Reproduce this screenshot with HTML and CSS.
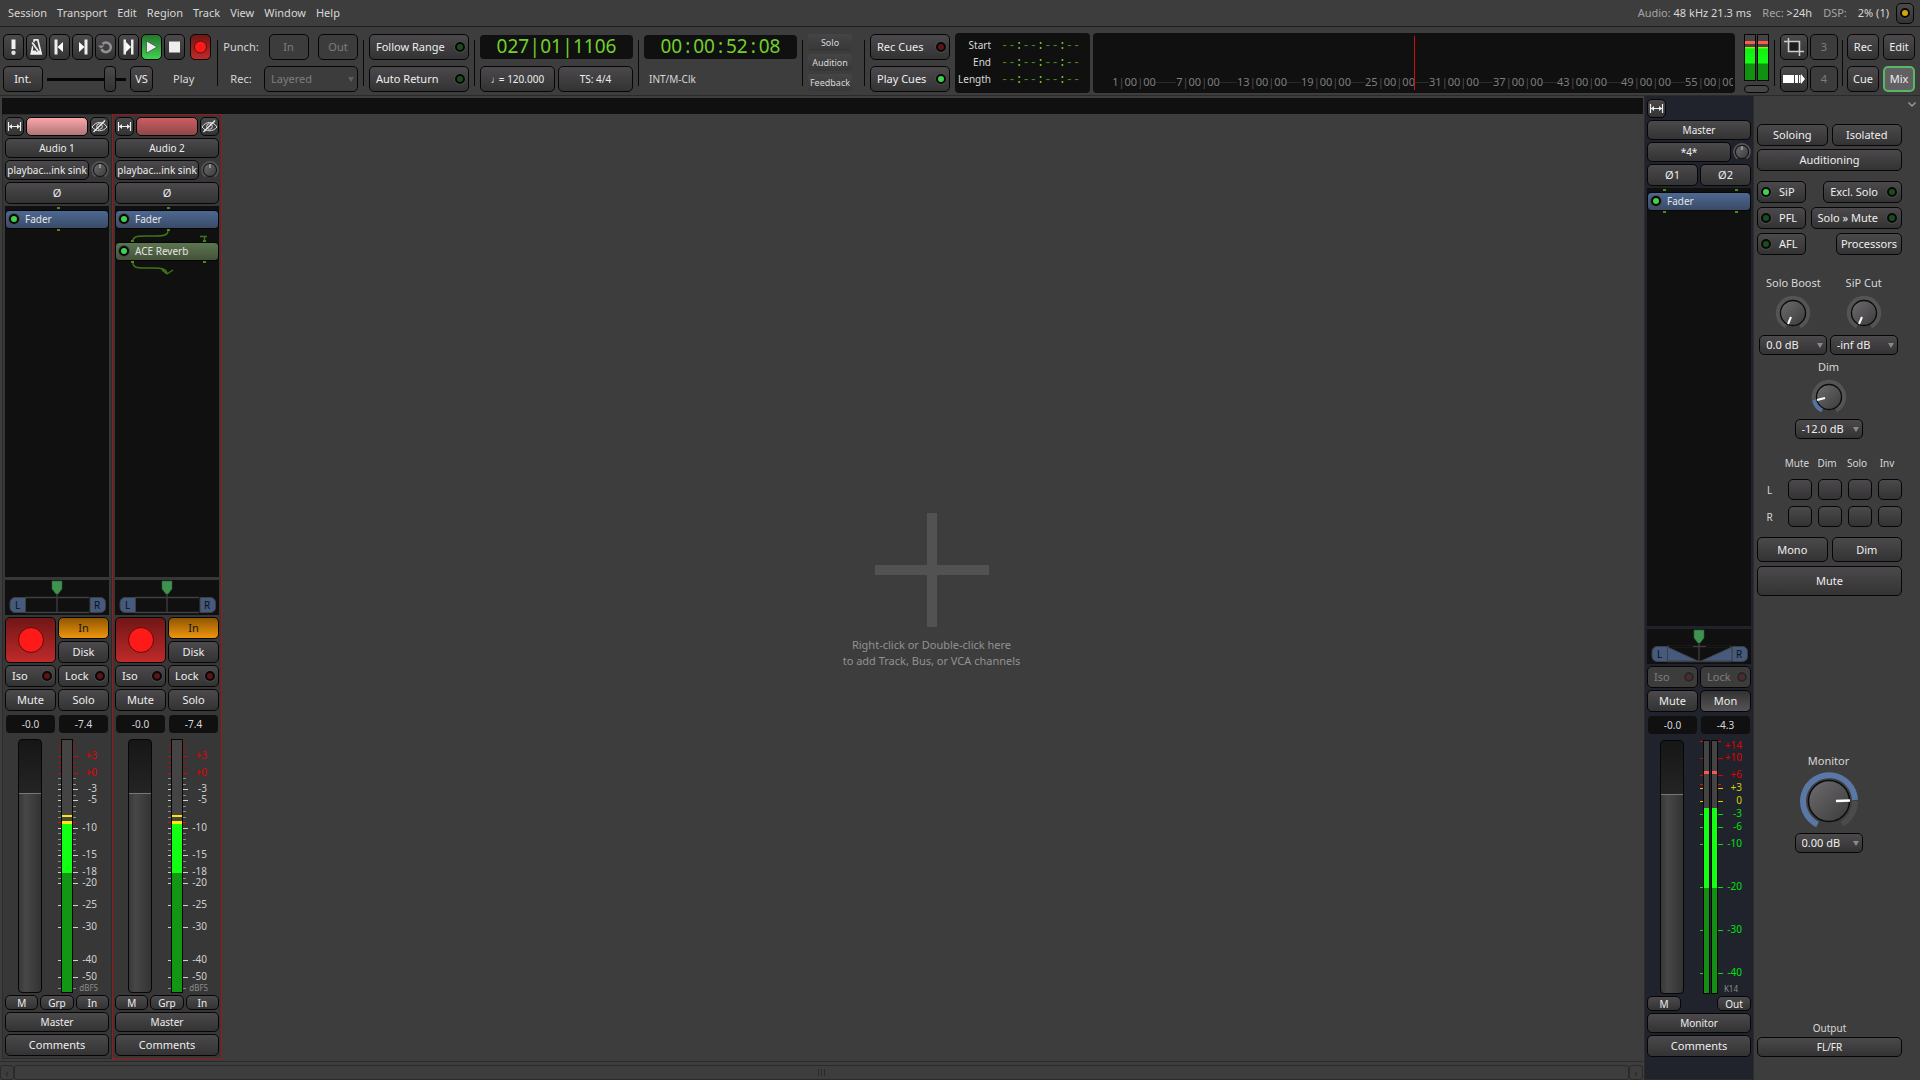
FILE: index.html
```html
<!DOCTYPE html>
<html lang="en">
<head>
    <meta charset="UTF-8">
    <meta name="viewport" content="width=device-width, initial-scale=1.0">
    <title>Mixer</title>
    <link rel="stylesheet" href="styles.css">
</head>
<body>
    <!-- shared icons -->
    <svg class="defs" width="0" height="0">
        <defs>
            <linearGradient id="knobFill" x1="0" y1="0" x2="1" y2="1">
                <stop offset="0" stop-color="#6e6c6e"/>
                <stop offset="1" stop-color="#3c3b3c"/>
            </linearGradient>
            <symbol id="i-width" viewBox="0 0 15 15">
                <path d="M1.500 3v9M13.500 3v9M2 7.500h11" fill="none" stroke="#eee" stroke-width="1.200"/>
                <path d="M2 7.500l3-2.500v5zM13 7.500l-3-2.500v5z" fill="#eee"/>
            </symbol>
            <symbol id="i-hide" viewBox="0 0 17 15">
                <path d="M1 8c4-6 11-6 15 0c-4 5-11 5-15 0z" fill="none" stroke="#ddd"/>
                <circle cx="8.500" cy="7.500" r="2.800" fill="none" stroke="#ddd"/>
                <path d="M2.500 13L14 1.500" stroke="#eee" stroke-width="1.300"/>
            </symbol>
            <symbol id="i-knob" viewBox="0 0 18 18">
                <path d="M4.500 15.500a8 8 0 1 1 9 0" fill="none" stroke="#575657" stroke-width="1.600"/>
                <circle cx="9" cy="9" r="6.500" fill="url(#knobFill)" stroke="#111"/>
                <path d="M9 3v4" stroke="#ccc"/>
            </symbol>
            <symbol id="i-dial" viewBox="0 0 36 36">
                <path d="M11 31.500a15.200 15.200 0 1 1 14 0" fill="none" stroke="#555455" stroke-width="4"/>
                <circle cx="18" cy="18" r="12.500" fill="url(#knobFill)" stroke="#0c0c0c" stroke-width="1.300"/>
            </symbol>
            <symbol id="i-pan" viewBox="0 0 104 35">
                <path d="M20 17.500h64M20 32.500h64M52 13v20" stroke="#3f3f40" stroke-width="1.300"/>
                <path d="M20.500 17.500H10a5 5 0 0 0-5 5v5a5 5 0 0 0 5 5h10.500zM85 17.500h10.500a5 5 0 0 1 5 5v5a5 5 0 0 1-5 5H85z" fill="#455a7d" stroke="#3f3f40"/>
                <path d="M47 1h10v8l-4 5h-2l-4-5z" fill="#3e9350" stroke="#2a5f37" stroke-width=".600"/>
            </symbol>
        </defs>
    </svg>

    <!-- menu bar -->
    <header class="menubar">
        <nav class="menu">
            <button>Session</button>
            <button>Transport</button>
            <button>Edit</button>
            <button>Region</button>
            <button>Track</button>
            <button>View</button>
            <button>Window</button>
            <button>Help</button>
        </nav>
        <div class="status">
            <span><em>Audio:</em> 48 kHz 21.3 ms</span>
            <span><em>Rec:</em> &gt;24h</span>
            <span><em>DSP:</em></span>
            <span>2% (1)</span>
            <button class="btn log" aria-label="Error log"><i class="led yellow"></i></button>
        </div>
    </header>

    <!-- transport bar -->
    <section class="toolbar">
        <div class="group transport">
            <div class="row">
                <button class="btn" aria-label="Panic"><svg width="15" height="18" viewBox="0 0 15 18"><path d="M5.500 1.500h4v9.500h-4z" fill="#f0f0f0"/><circle cx="7.500" cy="14.800" r="2.200" fill="#e0e0e0"/></svg></button>
                <button class="btn" aria-label="Metronome"><svg width="15" height="18" viewBox="0 0 15 18"><path d="M5.200 1.800h3.600l3.400 14H2.200z" fill="none" stroke="#f0f0f0" stroke-width="1.700"/><path d="M2.800 12.500h9l.8 3.500H2z" fill="#f0f0f0"/><path d="M3.200 4.500l6 8.500" stroke="#3a393a" stroke-width="3.500"/><path d="M3.200 4.500l6 8.500" stroke="#f0f0f0" stroke-width="1.800"/></svg></button>
                <button class="btn" aria-label="Go to start"><svg width="15" height="16" viewBox="0 0 15 16"><path d="M2.500 .500h3v15h-3z" fill="#eee"/><path d="M5.500 8l5.500-5v10z" fill="#fff"/></svg></button>
                <button class="btn" aria-label="Go to end"><svg width="15" height="16" viewBox="0 0 15 16"><path d="M9.500 .500h3v15h-3z" fill="#eee"/><path d="M9.500 8L4 3v10z" fill="#fff"/></svg></button>
                <button class="btn" aria-label="Loop"><svg width="15" height="16" viewBox="0 0 15 16"><path d="M4.500 5a4.800 4.800 0 1 1-1 5" fill="none" stroke="#929092" stroke-width="2.600"/><path d="M0 6.500h6.500L3 9.500z" fill="#929092"/></svg></button>
                <button class="btn" aria-label="Play range"><svg width="15" height="16" viewBox="0 0 15 16"><path d="M2.500 .500h2.500v15H2.500zM10 .500h2.500v15H10z" fill="#eee"/><path d="M5 3l5 5-5 5z" fill="#fff"/></svg></button>
                <button class="btn play" aria-label="Play"><svg width="15" height="16" viewBox="0 0 15 16"><path d="M2.500 2L13 8 2.500 14z" fill="#eee" stroke="#333" stroke-width=".600"/></svg></button>
                <button class="btn" aria-label="Stop"><svg width="15" height="16" viewBox="0 0 15 16"><path d="M2 2.500h11v11H2z" fill="#eee"/></svg></button>
                <button class="btn rec" aria-label="Record"><svg width="15" height="16" viewBox="0 0 15 16"><circle cx="7.500" cy="8" r="6" fill="#ff1a1a" stroke="#5c0d0d"/></svg></button>
            </div>
            <div class="row">
                <button class="btn int">Int.</button>
                <input class="shuttle" type="range" value="86" aria-label="Shuttle speed">
                <button class="btn vs">VS</button>
                <span class="state">Play</span>
            </div>
        </div>
        <i class="sep"></i>
        <div class="group punch">
            <div class="row">
                <span class="caption">Punch:</span>
                <button class="btn" disabled>In</button>
                <button class="btn" disabled>Out</button>
            </div>
            <div class="row">
                <label class="caption" for="recmode">Rec:</label>
                <span class="select"><select id="recmode" disabled><option>Layered</option></select></span>
            </div>
        </div>
        <i class="sep"></i>
        <div class="group follow">
            <button class="btn toggle">Follow Range<i class="led green-off"></i></button>
            <button class="btn toggle">Auto Return<i class="led green-off"></i></button>
        </div>
        <i class="sep"></i>
        <div class="group clocks">
            <div class="clock">027<b>|</b>01<b>|</b>1106</div>
            <div class="row">
                <button class="btn small"><i class="note">♩</i>= 120.000</button>
                <button class="btn small">TS: 4/4</button>
            </div>
        </div>
        <i class="sep"></i>
        <div class="group clocks">
            <div class="clock">00<b>:</b>00<b>:</b>52<b>:</b>08</div>
            <div class="source">INT/M-Clk</div>
        </div>
        <i class="sep"></i>
        <div class="alerts">
            <button>Solo</button>
            <button>Audition</button>
            <button>Feedback</button>
        </div>
        <i class="sep"></i>
        <div class="group cues">
            <button class="btn toggle">Rec Cues<i class="led red"></i></button>
            <button class="btn toggle">Play Cues<i class="led green"></i></button>
        </div>
        <dl class="selection">
            <dt>Start</dt><dd>--<b>:</b>--<b>:</b>--<b>:</b>--</dd>
            <dt>End</dt><dd>--<b>:</b>--<b>:</b>--<b>:</b>--</dd>
            <dt>Length</dt><dd>--<b>:</b>--<b>:</b>--<b>:</b>--</dd>
        </dl>
        <div class="timeline">
            <div class="ruler">
                <span>1<b>|</b>00<b>|</b>00</span>
                <span>7<b>|</b>00<b>|</b>00</span>
                <span>13<b>|</b>00<b>|</b>00</span>
                <span>19<b>|</b>00<b>|</b>00</span>
                <span>25<b>|</b>00<b>|</b>00</span>
                <span>31<b>|</b>00<b>|</b>00</span>
                <span>37<b>|</b>00<b>|</b>00</span>
                <span>43<b>|</b>00<b>|</b>00</span>
                <span>49<b>|</b>00<b>|</b>00</span>
                <span>55<b>|</b>00<b>|</b>00</span>
            </div>
            <div class="playhead"></div>
        </div>
        <div class="minimeter">
            <div class="bars"><i></i><i></i></div>
            <button aria-label="Reset peak"></button>
        </div>
        <i class="sep"></i>
        <div class="group views">
            <div class="row">
                <button class="btn" aria-label="Crop"><svg width="20" height="18" viewBox="0 0 20 18"><path d="M6 4h8v9H6z" fill="#1c1c1c"/><path d="M0 3.500h15.500V18M4.500 0v13.500H20" fill="none" stroke="#ccc" stroke-width="1.500"/></svg></button>
                <button class="btn" disabled>3</button>
            </div>
            <div class="row">
                <button class="btn" aria-label="Clips"><svg width="22" height="10" viewBox="0 0 22 10"><path d="M0 1h11v8H0zM12 1h3v8h-3zM16 1h1.500v8H16zM18 0l4 5-4 5z" fill="#fff"/></svg></button>
                <button class="btn" disabled>4</button>
            </div>
        </div>
        <i class="sep"></i>
        <div class="group pages">
            <div class="row">
                <button class="btn">Rec</button>
                <button class="btn">Edit</button>
            </div>
            <div class="row">
                <button class="btn">Cue</button>
                <button class="btn current">Mix</button>
            </div>
        </div>
    </section>

    <main class="mixer">
        <section class="tracks">
            <div class="groups"></div>
            <div class="strips">
                <!-- Audio 1 -->
                <article class="strip">
                    <div class="row head">
                        <button class="btn" aria-label="Strip width"><svg width="15" height="15"><use href="#i-width"/></svg></button>
                        <button class="btn color pink" aria-label="Track color"></button>
                        <button class="btn" aria-label="Hide strip"><svg width="17" height="15"><use href="#i-hide"/></svg></button>
                    </div>
                    <button class="btn small name">Audio 1</button>
                    <div class="row input">
                        <button class="btn small">playbac…ink sink</button>
                        <svg width="18" height="18"><use href="#i-knob"/></svg>
                    </div>
                    <button class="btn phase">Ø</button>
                    <div class="processors">
                        <svg width="104" height="4"><path d="M52 1h3v2h-3z" fill="#4a8a18"/></svg>
                        <button class="proc"><i class="led green"></i>Fader</button>
                        <svg width="104" height="13"><path d="M52 0h3v2h-3z" fill="#4a8a18"/></svg>
                    </div>
                    <svg class="panner" width="104" height="35"><use href="#i-pan"/><text x="10" y="29">L</text><text x="89" y="29">R</text></svg>
                    <div class="arm">
                        <button class="btn rec" aria-label="Record arm"><svg width="28" height="28"><circle cx="14" cy="14" r="12.500" fill="#ff1a1a" stroke="#5c0d0d"/></svg></button>
                        <button class="btn in">In</button>
                        <button class="btn">Disk</button>
                    </div>
                    <div class="pair">
                        <button class="btn toggle">Iso<i class="led red"></i></button>
                        <button class="btn toggle">Lock<i class="led red"></i></button>
                        <button class="btn">Mute</button>
                        <button class="btn">Solo</button>
                    </div>
                    <div class="pair levels">
                        <input class="value" value="-0.0" aria-label="Gain">
                        <output class="value">-7.4</output>
                    </div>
                    <div class="pair faders">
                        <input class="fader" type="range" value="79" aria-label="Fader">
                        <svg class="scale" data-scale="dbfs" width="51" height="254"></svg>
                    </div>
                    <div class="row foot">
                        <button class="btn small">M</button>
                        <button class="btn small">Grp</button>
                        <button class="btn small">In</button>
                    </div>
                    <button class="btn small out">Master</button>
                    <button class="btn comments">Comments</button>
                </article>

                <!-- Audio 2 -->
                <article class="strip selected">
                    <div class="row head">
                        <button class="btn" aria-label="Strip width"><svg width="15" height="15"><use href="#i-width"/></svg></button>
                        <button class="btn color crimson" aria-label="Track color"></button>
                        <button class="btn" aria-label="Hide strip"><svg width="17" height="15"><use href="#i-hide"/></svg></button>
                    </div>
                    <button class="btn small name">Audio 2</button>
                    <div class="row input">
                        <button class="btn small">playbac…ink sink</button>
                        <svg width="18" height="18"><use href="#i-knob"/></svg>
                    </div>
                    <button class="btn phase">Ø</button>
                    <div class="processors">
                        <svg width="104" height="4"><path d="M52 1h3v2h-3z" fill="#4a8a18"/></svg>
                        <button class="proc"><i class="led green"></i>Fader</button>
                        <svg width="104" height="13">
                            <path d="M52 0h3v2h-3zM16 11h3v2h-3zM88 11h3v2h-3z" fill="#4a8a18"/>
                            <path d="M53 2c0 4-4 5-12 5H30c-9 0-12 1-12 5M85 7.500h7M89.500 7v5" fill="none" stroke="#3f7614" stroke-width="1.400"/>
                        </svg>
                        <button class="proc plugin"><i class="led green"></i>ACE Reverb</button>
                        <svg width="104" height="15">
                            <path d="M16 0h3v2h-3zM88 0h3v2h-3z" fill="#4a8a18"/>
                            <path d="M18 2c0 4 3 5 12 5h9c8 0 13 1 13 6M47 9l5 4 6-4" fill="none" stroke="#3f7614" stroke-width="1.400"/>
                        </svg>
                    </div>
                    <svg class="panner" width="104" height="35"><use href="#i-pan"/><text x="10" y="29">L</text><text x="89" y="29">R</text></svg>
                    <div class="arm">
                        <button class="btn rec" aria-label="Record arm"><svg width="28" height="28"><circle cx="14" cy="14" r="12.500" fill="#ff1a1a" stroke="#5c0d0d"/></svg></button>
                        <button class="btn in">In</button>
                        <button class="btn">Disk</button>
                    </div>
                    <div class="pair">
                        <button class="btn toggle">Iso<i class="led red"></i></button>
                        <button class="btn toggle">Lock<i class="led red"></i></button>
                        <button class="btn">Mute</button>
                        <button class="btn">Solo</button>
                    </div>
                    <div class="pair levels">
                        <input class="value" value="-0.0" aria-label="Gain">
                        <output class="value">-7.4</output>
                    </div>
                    <div class="pair faders">
                        <input class="fader" type="range" value="79" aria-label="Fader">
                        <svg class="scale" data-scale="dbfs" width="51" height="254"></svg>
                    </div>
                    <div class="row foot">
                        <button class="btn small">M</button>
                        <button class="btn small">Grp</button>
                        <button class="btn small">In</button>
                    </div>
                    <button class="btn small out">Master</button>
                    <button class="btn comments">Comments</button>
                </article>

                <!-- empty area -->
                <div class="empty">
                    <svg width="114" height="114"><path d="M52 0h10v52h52v10H62v52H52V62H0V52h52z" fill="#525252"/></svg>
                    <p>Right-click or Double-click here<br>to add Track, Bus, or VCA channels</p>
                </div>
            </div>
            <div class="scrollbar">
                <button aria-label="Scroll left">‹</button>
                <div class="thumb"><i></i></div>
                <button aria-label="Scroll right">›</button>
            </div>
        </section>

        <!-- Master strip -->
        <article class="strip master">
            <div class="row head">
                <button class="btn" aria-label="Strip width"><svg width="15" height="15"><use href="#i-width"/></svg></button>
            </div>
            <button class="btn small name">Master</button>
            <div class="row input">
                <button class="btn small">*4*</button>
                <svg width="18" height="18"><use href="#i-knob"/></svg>
            </div>
            <div class="pair">
                <button class="btn">Ø1</button>
                <button class="btn">Ø2</button>
            </div>
            <div class="processors">
                <svg width="104" height="4"><path d="M16 1h3v2h-3zM88 1h3v2h-3z" fill="#4a8a18"/></svg>
                <button class="proc"><i class="led green"></i>Fader</button>
                <svg width="104" height="13"><path d="M16 0h3v2h-3zM88 0h3v2h-3z" fill="#4a8a18"/></svg>
            </div>
            <svg class="panner" width="104" height="35"><use href="#i-pan"/><path d="M20.500 18L51 32H20.500zM85 18L54 32h31z" fill="#455a7d" stroke="#3f3f40"/><path d="M22 17.500h24M59 17.500h24" stroke="#101010" stroke-width="1.500"/><text x="10" y="29">L</text><text x="89" y="29">R</text></svg>
            <div class="pair">
                <button class="btn toggle" disabled>Iso<i class="led red"></i></button>
                <button class="btn toggle" disabled>Lock<i class="led red"></i></button>
                <button class="btn">Mute</button>
                <button class="btn pressed">Mon</button>
            </div>
            <div class="pair levels">
                <input class="value" value="-0.0" aria-label="Gain">
                <output class="value">-4.3</output>
            </div>
            <div class="pair faders">
                <input class="fader" type="range" value="79" aria-label="Fader">
                <svg class="scale" data-scale="k14" width="51" height="254"></svg>
            </div>
            <div class="row foot">
                <button class="btn small">M</button>
                <button class="btn small">Out</button>
            </div>
            <button class="btn small out">Monitor</button>
            <button class="btn comments">Comments</button>
        </article>

        <!-- Monitor section -->
        <aside class="monitor">
            <svg class="chevron" width="10" height="7"><path d="M1.500 1.500L5 5l3.500-3.500" fill="none" stroke="#999" stroke-width="1.500"/></svg>
            <div class="halves">
                <button class="btn">Soloing</button>
                <button class="btn">Isolated</button>
            </div>
            <button class="btn wide">Auditioning</button>
            <div class="modes">
                <div class="row"><button class="btn mode"><i class="led green"></i>SiP</button><button class="btn toggle">Excl. Solo<i class="led green-off"></i></button></div>
                <div class="row"><button class="btn mode"><i class="led green-off"></i>PFL</button><button class="btn toggle">Solo » Mute<i class="led green-off"></i></button></div>
                <div class="row"><button class="btn mode"><i class="led green-off"></i>AFL</button><button class="btn">Processors</button></div>
            </div>
            <div class="dials">
                <div class="dial">
                    <label for="boost">Solo Boost</label>
                    <svg width="36" height="36"><use href="#i-dial"/><path d="M16 22l-3 7" stroke="#fff" stroke-width="2"/></svg>
                    <span class="select"><select id="boost"><option>0.0 dB</option></select></span>
                </div>
                <div class="dial">
                    <label for="cut">SiP Cut</label>
                    <svg width="36" height="36"><use href="#i-dial"/><path d="M16 22l-3 7" stroke="#fff" stroke-width="2"/></svg>
                    <span class="select"><select id="cut"><option>-inf dB</option></select></span>
                </div>
            </div>
            <div class="dial">
                <label for="dim">Dim</label>
                <svg width="36" height="36"><use href="#i-dial"/><path d="M3 21a15.200 15.200 0 0 0 8 10.500" fill="none" stroke="#55719d" stroke-width="4"/><path d="M14 19l-8 2" stroke="#fff" stroke-width="2"/></svg>
                <span class="select"><select id="dim"><option>-12.0 dB</option></select></span>
            </div>
            <table class="channels">
                <thead>
                    <tr><td class="side"></td><th>Mute</th><th>Dim</th><th>Solo</th><th>Inv</th></tr>
                </thead>
                <tbody>
                    <tr><th>L</th><td><button class="btn" aria-label="L mute"></button></td><td><button class="btn" aria-label="L dim"></button></td><td><button class="btn" aria-label="L solo"></button></td><td><button class="btn" aria-label="L invert"></button></td></tr>
                    <tr><th>R</th><td><button class="btn" aria-label="R mute"></button></td><td><button class="btn" aria-label="R dim"></button></td><td><button class="btn" aria-label="R solo"></button></td><td><button class="btn" aria-label="R invert"></button></td></tr>
                </tbody>
            </table>
            <div class="halves tall">
                <button class="btn">Mono</button>
                <button class="btn">Dim</button>
            </div>
            <button class="btn wide mute">Mute</button>
            <div class="dial level">
                <label for="level">Monitor</label>
                <svg width="60" height="60" viewBox="0 0 60 60">
                    <path d="M43 53A26 26 0 0 0 56 30" fill="none" stroke="#4c4b4c" stroke-width="6"/>
                    <path d="M18.500 53.500A26 26 0 1 1 56 29" fill="none" stroke="#5a77a5" stroke-width="6"/>
                    <circle cx="30" cy="30" r="20.500" fill="url(#knobFill)" stroke="#0c0c0c" stroke-width="1.500"/>
                    <path d="M37 30l14-.500" stroke="#fff" stroke-width="2.500"/>
                </svg>
                <span class="select"><select id="level"><option>0.00 dB</option></select></span>
            </div>
            <div class="output">
                <span>Output</span>
                <button class="btn small">FL/FR</button>
            </div>
        </aside>
    </main>

    <script src="script.js"></script>
</body>
</html>
```
FILE: styles.css
```css
*{
    margin: 0;
    padding: 0;
    box-sizing: border-box;
}
body{
    display: flex;
    flex-direction: column;
    min-height: 100vh;
    background: #3d3d3d;
    color: #d8d8d8;
    font: 11px/16px "Noto Sans", "Open Sans", sans-serif;
}
svg{
    display: block;
    flex: none;
}
.defs{
    position: absolute;
}
button, input, select{
    font: inherit;
    color: inherit;
}
button{
    border: 0;
    background: none;
    white-space: nowrap;
}
.row{
    display: flex;
    gap: 2px;
}

/* buttons */
.btn{
    display: flex;
    align-items: center;
    justify-content: center;
    height: 22px;
    border: 1px solid #060606;
    border-radius: 5px;
    background: linear-gradient(#4b494b, #343334);
    color: #eee;
    overflow: hidden;
}
.btn:disabled{
    background: #3d3c3d;
    color: #7d7d7d;
}
.btn:disabled .led{
    opacity: .4;
}
.small{
    font-size: 10px;
}
.toggle{
    justify-content: space-between;
    padding: 0 3px 0 6px;
}
.rec{
    background: linear-gradient(#701717, #c02a2a);
}
.play{
    background: linear-gradient(#26752f, #41d14f);
}
.pressed{
    background: linear-gradient(#333233, #555355);
}
.led{
    flex: none;
    width: 10px;
    height: 10px;
    border: 2px solid #080808;
    border-radius: 50%;
    box-shadow: 0 0 0 1px #4a494a;
}
.green{
    background: #3fd24e;
}
.green-off{
    background: #1a4d1d;
}
.red{
    background: #5c1414;
}
.yellow{
    background: #d6a400;
}
.select{
    position: relative;
    display: block;
}
.select::after{
    content: "";
    position: absolute;
    right: 4px;
    top: 50%;
    margin-top: -2px;
    border: 3px solid transparent;
    border-top: 5px solid #8a8a8a;
    border-bottom: 0;
    pointer-events: none;
}
.select select{
    display: block;
    appearance: none;
    width: 100%;
    height: 20px;
    padding-left: 6px;
    border: 1px solid #060606;
    border-radius: 5px;
    background: linear-gradient(#4b494b, #343334);
    color: #eee;
}
.select select:disabled{
    background: #3d3c3d;
    color: #7d7d7d;
    opacity: 1;
}

/* menu bar */
.menubar{
    display: flex;
    justify-content: space-between;
    align-items: center;
    height: 27px;
    padding: 0 6px 0 8px;
    border-bottom: 1px solid #1e1e1e;
}
.menu{
    display: flex;
    gap: 10px;
}
.status{
    display: flex;
    align-items: center;
    gap: 11px;
}
.status em{
    font-style: normal;
    color: #a5a5a5;
}
.log{
    width: 18px;
    height: 21px;
    margin-left: -4px;
}

/* transport bar */
.toolbar{
    display: flex;
    height: 69px;
    padding: 6px 5px 3px 3px;
    border-bottom: 1px solid #2a2a2a;
}
.sep{
    flex: none;
    width: 1px;
    height: 46px;
    margin: 7px 5px 0;
    background: #0a0a0a;
}
.views + .sep{
    margin: 7px 4px 0;
}
.group{
    flex: none;
    display: flex;
    flex-direction: column;
    gap: 6px;
    padding-top: 1px;
}
.group .btn{
    height: 26px;
}
.transport{
    width: 209px;
}
.transport .row:first-child .btn{
    width: 21px;
}
.transport .row:first-child .rec{
    margin-left: 3px;
}
.row .int{
    width: 42px;
}
.row .vs{
    width: 25px;
}
.state{
    width: 60px;
    line-height: 26px;
    text-align: center;
}
.shuttle{
    appearance: none;
    width: 79px;
    height: 26px;
    margin: 0 2px;
    background: linear-gradient(#060606, #060606) center / 100% 3px no-repeat;
}
.shuttle::-webkit-slider-thumb{
    appearance: none;
    width: 12px;
    height: 26px;
    border: 1px solid #060606;
    border-radius: 4px;
    background: linear-gradient(#4b494b, #343334);
}
.punch{
    width: 135px;
}
.punch .row{
    justify-content: space-between;
}
.punch .caption{
    width: 36px;
    line-height: 26px;
    text-align: center;
}
.punch .btn{
    width: 40px;
}
.punch .select{
    width: 94px;
}
.punch select{
    height: 26px;
}
.punch .select::after{
    border-top-color: #606060;
}
.follow{
    width: 100px;
}
.clocks{
    width: 153px;
}
.clocks .row{
    gap: 3px;
}
.clocks .btn{
    flex: 1;
}
.note{
    width: 6px;
    margin-right: 2px;
    font-style: normal;
}
.clock{
    height: 24px;
    margin: 1px 0;
    border-radius: 4px;
    background: #101010;
    color: #72d02a;
    font-size: 19px;
    line-height: 22px;
    text-align: center;
}
.clock b{
    display: inline-block;
    width: 11px;
    font-weight: normal;
}
.source{
    padding-left: 5px;
    font-size: 10px;
    line-height: 26px;
}
.alerts{
    flex: none;
    display: flex;
    flex-direction: column;
    gap: 3px;
    width: 51px;
    padding-top: 1px;
}
.alerts button{
    width: 44px;
    height: 17px;
    border-radius: 3px;
    background: linear-gradient(#464546, #383738);
    font-size: 9px;
}
.cues{
    width: 80px;
}
.selection{
    flex: none;
    display: grid;
    grid-template-columns: 36px 1fr;
    grid-auto-rows: 17px;
    column-gap: 10px;
    width: 135px;
    height: 60px;
    margin: 0 3px 0 5px;
    padding-top: 4px;
    border-radius: 4px;
    background: #101010;
    font-size: 10px;
    line-height: 17px;
}
.selection dt{
    text-align: right;
}
.selection dd{
    display: flex;
    padding-top: 1px;
    color: #4c8522;
    font: 12px/17px "Liberation Mono", monospace;
}
.selection b{
    color: #72d02a;
    font-weight: normal;
}
.timeline{
    position: relative;
    flex: 1;
    height: 60px;
    border-radius: 4px;
    background: #101010;
    overflow: hidden;
}
.ruler{
    display: flex;
    margin: 41px 2px 0 9px;
    overflow: hidden;
}
.ruler span{
    flex: none;
    display: flex;
    align-items: center;
    width: 64px;
    color: #7e7e7e;
}
.ruler span::before, .ruler span::after{
    content: "";
    flex: 1;
    height: 1px;
    background: #2b2b2b;
}
.ruler span:first-child::before{
    background: none;
}
.ruler b{
    color: #505050;
    font-weight: normal;
}
.playhead{
    position: absolute;
    left: 50%;
    top: 3px;
    width: 1px;
    height: 54px;
    background: #d01010;
}
.minimeter{
    flex: none;
    width: 25px;
    margin-left: 9px;
    padding-top: 1px;
}
.bars{
    display: flex;
    gap: 1px;
}
.bars i{
    flex: 1;
    height: 47px;
    border: 1px solid #060606;
    background: linear-gradient(#444 6px, #ff5a4d 6px, #ff5a4d 9px, #444 9px, #444 12px, #d8e600 12px, #10f010 14px, #13ff13 28px, #129012 29px);
}
.minimeter button{
    display: block;
    width: 25px;
    height: 8px;
    margin-top: 4px;
    border: 1px solid #060606;
    border-radius: 4px;
    background: #474547;
}
.views .btn{
    width: 28px;
}
.pages .row{
    gap: 4px;
}
.pages .btn{
    width: 32px;
}
.group .current{
    border: 2px solid #56b865;
    background: #636063;
}

/* mixer */
.mixer{
    flex: 1;
    display: flex;
}
.tracks{
    flex: 1;
    display: flex;
    flex-direction: column;
    min-width: 0;
    padding-top: 2px;
}
.groups{
    height: 16px;
    margin: 0 0 0 2px;
    background: #101010;
}
.strips{
    flex: 1;
    display: flex;
    margin-bottom: 2px;
    padding-left: 2px;
}
.strip{
    flex: none;
    display: flex;
    flex-direction: column;
    gap: 2px;
    width: 110px;
    padding: 2px;
    border: 1px solid #2c2c2c;
    background: #373737;
}
.selected{
    border-color: #a01616;
}
.strip .head .btn{
    width: 19px;
    height: 19px;
}
.strip .head .color{
    flex: 1;
}
.head .pink{
    background: linear-gradient(#fba5a8, #b07578);
}
.head .crimson{
    background: linear-gradient(#cb5e61, #904648);
}
.name, .strip .out{
    height: 20px;
}
.input{
    align-items: center;
    height: 20px;
}
.input .btn{
    flex: 1;
    min-width: 0;
    height: 20px;
}
.processors{
    flex: 1;
    margin-bottom: 1px;
    background: #101010;
}
.proc{
    display: flex;
    align-items: center;
    gap: 6px;
    width: 104px;
    height: 19px;
    padding: 0 0 1px 3px;
    border: 1px solid #060606;
    border-radius: 4px;
    background: linear-gradient(#4d6893, #3a4b66);
    color: #e4e4e4;
    font-size: 10px;
}
.plugin{
    background: linear-gradient(#5d7550, #445239);
}
.panner{
    background: #101010;
}
.panner text{
    fill: #0c0f16;
    font-size: 10px;
}
.arm{
    display: grid;
    grid-template-columns: 1fr 1fr;
    gap: 2px;
}
.arm .rec{
    grid-row: span 2;
    height: 46px;
}
.arm .in{
    background: linear-gradient(#8f5600, #ee950d);
    color: #141414;
}
.pair{
    display: grid;
    grid-template-columns: 1fr 1fr;
    gap: 2px;
}
.levels{
    padding: 2px 1px;
    gap: 4px;
}
.value{
    width: 100%;
    height: 18px;
    border: 0;
    border-radius: 4px;
    background: #101010;
    color: #d8d8d8;
    font-size: 10px;
    line-height: 18px;
    text-align: center;
}
.faders{
    padding-top: 2px;
}
.fader{
    appearance: none;
    writing-mode: vertical-lr;
    direction: rtl;
    width: 24px;
    height: 254px;
    margin-left: 13px;
    border: 1px solid #060606;
    border-radius: 4px;
    background: linear-gradient(#161616, #242424 53px, #777 53px, #777 54px, transparent 54px), linear-gradient(90deg, #383838, #474747 30%, #333);
}
.fader::-webkit-slider-thumb{
    appearance: none;
    width: 22px;
    height: 1px;
}
.scale text{
    font-size: 10px;
    text-anchor: end;
}
.scale .unit{
    fill: #8c8c8c;
    font-size: 8px;
}
.foot .btn{
    flex: 1;
    height: 15px;
}

/* master strip */
.master{
    margin-left: 1px;
    padding-top: 3px;
    border-top: 0;
    background: #20232c;
}
.master .foot{
    justify-content: space-between;
}
.master .foot .btn{
    flex: none;
    width: 34px;
}
.master .comments{
    margin-bottom: 20px;
}

/* empty area */
.empty{
    flex: 1;
    display: flex;
    flex-direction: column;
    align-items: center;
    justify-content: center;
    gap: 10px;
    padding: 8px 2px 0 0;
    color: #929292;
    text-align: center;
}
.scrollbar{
    display: flex;
    height: 19px;
    border-top: 1px solid #2a2a2a;
    padding-top: 3px;
}
.scrollbar button, .thumb{
    border: 1px solid #2a2a2a;
    border-radius: 3px;
}
.scrollbar button{
    width: 14px;
    color: #262626;
    line-height: 12px;
}
.thumb{
    flex: 1;
    display: flex;
    align-items: center;
    justify-content: center;
}
.thumb i{
    width: 7px;
    height: 7px;
    background: repeating-linear-gradient(90deg, #2a2a2a 0 1px, transparent 1px 3px);
}

/* monitor section */
.monitor{
    flex: none;
    display: flex;
    flex-direction: column;
    width: 166px;
    padding: 5px 18px 23px 3px;
}
.chevron{
    align-self: flex-end;
    margin: 0 -15px 16px 0;
}
.halves{
    display: grid;
    grid-template-columns: 1fr 1fr;
    gap: 4px;
    margin-bottom: 3px;
}
.modes{
    display: flex;
    flex-direction: column;
    gap: 4px;
    margin: 10px 0 20px;
}
.modes .row{
    justify-content: space-between;
}
.modes .btn{
    padding: 0 4px;
}
.modes .toggle{
    gap: 9px;
    padding-left: 6px;
}
.modes .mode{
    justify-content: flex-start;
    gap: 8px;
    width: 49px;
    padding: 0 3px;
}
.dials{
    display: flex;
    justify-content: space-evenly;
    margin-right: 2px;
}
.dial{
    display: flex;
    flex-direction: column;
    align-items: center;
}
.monitor > .dial{
    margin-right: 2px;
}
.dial .select{
    width: 68px;
    margin: 4px 0;
}
.dial svg{
    margin-top: 4px;
}
.channels{
    width: 100%;
    margin-top: 6px;
    border-spacing: 0;
    table-layout: fixed;
}
.channels th{
    font-size: 10px;
    font-weight: normal;
}
.channels .side{
    width: 25px;
}
.channels tr{
    height: 27px;
}
.channels td .btn{
    width: 24px;
    height: 21px;
    margin-left: auto;
}
.tall{
    margin: 7px 0 4px;
}
.tall .btn{
    height: 25px;
}
.btn.mute{
    height: 30px;
}
.level{
    margin-top: 157px;
}
.dial.level svg{
    margin-top: 2px;
}
.dial.level .select{
    margin-top: 2px;
}
.output{
    display: flex;
    flex-direction: column;
    gap: 1px;
    margin-top: auto;
    font-size: 10px;
    text-align: center;
}
.output .btn{
    height: 20px;
}
```
FILE: script.js
```js
// meter scales: [y, label, colour, hideTick], ticks without a label are minor
var scales = {
    dbfs: {
        labelX: 39,
        unit: ["dBFS", 40, 252],
        marks: [
            [6, "", "#a01010"], [12, "", "#a01010"], [17, "+3", "#e00000"], [23, "", "#a01010"], [28, "", "#a01010"],
            [34, "+0", "#e00000"], [39, "", "#8c8c8c"], [45, "", "#8c8c8c"], [50, "-3", "#d0d0d0"], [56, "", "#8c8c8c"],
            [61, "-5", "#d0d0d0"], [67, "", "#8c8c8c"], [72, "", "#8c8c8c"], [78, "", "#8c8c8c"], [83, "", "#ff0000"],
            [89, "-10", "#d0d0d0"], [94, "", "#8c8c8c"], [100, "", "#8c8c8c"], [105, "", "#8c8c8c"], [111, "", "#8c8c8c"],
            [116, "-15", "#d0d0d0"], [122, "", "#8c8c8c"], [128, "", "#8c8c8c"], [133, "-18", "#d0d0d0"], [139, "", "#8c8c8c"],
            [144, "-20", "#d0d0d0"], [166, "-25", "#d0d0d0"], [188, "-30", "#d0d0d0"], [221, "-40", "#d0d0d0"],
            [238, "-50", "#d0d0d0"], [249, "", "#8c8c8c"]
        ],
        bars: [[3, 12]],
        end: 15,
        peak: [76, 2, "#ffe60a"],
        fill: [[82, 3, "#ffe60a"], [85, 49, "#13ff13"], [134, 119, "#139613"]]
    },
    k14: {
        labelX: 42,
        unit: ["K14", 38, 252],
        marks: [
            [1, "", "#ff0000"], [6, "+14", "#e00000", true], [18, "+10", "#e00000"], [35, "+6", "#e00000"], [44, "", "#ff0000"],
            [48, "+3", "#d0d000"], [61, "0", "#d0d000"], [74, "-3", "#00e010"], [87, "-6", "#00e010"],
            [104, "-10", "#00e010"], [147, "-20", "#00e010"], [190, "-30", "#00e010"], [233, "-40", "#00e010"]
        ],
        bars: [[3, 7], [11, 7]],
        end: 18,
        peak: [31, 3, "#ff5555"],
        fill: [[68, 80, "#13ff13"], [148, 105, "#139013"]]
    }
};

function rect(x, y, w, h, color){
    return '<rect x="' + x + '" y="' + y + '" width="' + w + '" height="' + h + '" fill="' + color + '"/>';
}
function text(x, y, str, attr){
    return '<text x="' + x + '" y="' + y + '" ' + attr + '>' + str + '</text>';
}

document.querySelectorAll(".scale").forEach(function(svg){
    var s = scales[svg.dataset.scale];
    var html = "";
    s.marks.forEach(function(m){
        if(!m[3]){
            html += rect(0, m[0], 3, 1, m[2]) + rect(s.end, m[0], m[1] ? 5 : 3, 1, m[2]);
        }
        if(m[1]){
            html += text(s.labelX, m[0] + 3, m[1], 'fill="' + m[2] + '"');
        }
    });
    s.bars.forEach(function(b){
        html += rect(b[0], 0, b[1], 254, "#060606");
        html += rect(b[0] + 1, 1, b[1] - 2, 252, "#444");
        html += rect(b[0] + 1, s.peak[0], b[1] - 2, s.peak[1], s.peak[2]);
        s.fill.forEach(function(f){
            html += rect(b[0] + 1, f[0], b[1] - 2, f[1], f[2]);
        });
    });
    html += text(s.unit[1], s.unit[2], s.unit[0], 'class="unit"');
    svg.innerHTML = html;
});
```
